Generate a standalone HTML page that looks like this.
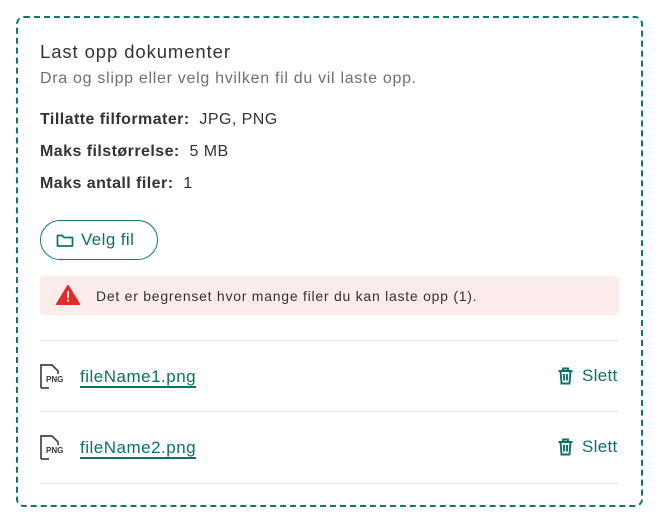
<!DOCTYPE html>
<html><head><meta charset="utf-8"><style>
*{margin:0;padding:0;box-sizing:border-box}
body{width:659px;height:524px;background:#fff;font-family:"Liberation Sans",sans-serif;color:#333;position:relative;overflow:hidden}
.box{position:absolute;left:16px;top:16px;width:627px;height:491px;border:2px dashed #13756f;border-radius:8px}
.a{position:absolute;left:40px;white-space:nowrap}
.teal{color:#0f6f69}
.hr{position:absolute;left:40px;width:579px;height:1px;background:#e6e6e6}
</style></head><body>
<div class="box"></div>
<div class="a" style="top:41px;font-size:18.5px;letter-spacing:0.9px;font-weight:500">Last opp dokumenter</div>
<div class="a" style="top:70px;font-size:16px;color:#707070;letter-spacing:0.7px">Dra og slipp eller velg hvilken fil du vil laste opp.</div>
<div class="a" style="top:111px;font-size:16px;letter-spacing:0.45px"><b style="font-weight:600">Tillatte filformater:</b>&nbsp; JPG, PNG</div>
<div class="a" style="top:143px;font-size:16px;letter-spacing:0.45px"><b style="font-weight:600">Maks filstørrelse:</b>&nbsp; 5 MB</div>
<div class="a" style="top:175px;font-size:16px;letter-spacing:0.45px"><b style="font-weight:600">Maks antall filer:</b>&nbsp; 1</div>
<div class="a teal" style="top:220px;width:118px;height:40px;border:1.5px solid #13756f;border-radius:20px;font-size:17px;padding:9px 0 0 40px;letter-spacing:0.4px">Velg fil
<svg style="position:absolute;left:15px;top:12px" width="18" height="15" viewBox="0 0 18 15"><path d="M1.5 2.5v10.5h15V4.5H8L6.5 2.5z" fill="none" stroke="#0f6f69" stroke-width="1.7" stroke-linejoin="round"/></svg></div>
<div class="a" style="top:276px;width:579px;height:39px;background:#fbebea;border-radius:4px;font-size:14px;padding:12px 0 0 56px;letter-spacing:0.75px">Det er begrenset hvor mange filer du kan laste opp (1).
<svg style="position:absolute;left:16px;top:9px" width="24" height="20" viewBox="0 0 24 20"><path d="M12 1L23 19H1z" fill="#e02b27" stroke="#e02b27" stroke-width="2" stroke-linejoin="round"/><rect x="11" y="6" width="2" height="7" fill="#fff"/><rect x="11" y="14.5" width="2" height="2" fill="#fff"/></svg></div>
<div class="hr" style="top:340px"></div>
<div class="hr" style="top:411px"></div>
<div class="hr" style="top:483px"></div>
<svg class="a" style="top:364px" width="26" height="25" viewBox="0 0 26 25"><path d="M1 24V1h11l6 6v3" fill="none" stroke="#444" stroke-width="1.7"/><path d="M1 24h8" stroke="#444" stroke-width="1.7"/><text x="6" y="18" font-size="8" font-weight="bold" font-family="Liberation Sans" fill="#333">PNG</text></svg>
<div class="a teal" style="left:80px;top:367px;font-size:17px;border-bottom:2px solid #0f6f69;line-height:19px;letter-spacing:0.5px">fileName1.png</div>
<svg class="a" style="top:435px" width="26" height="25" viewBox="0 0 26 25"><path d="M1 24V1h11l6 6v3" fill="none" stroke="#444" stroke-width="1.7"/><path d="M1 24h8" stroke="#444" stroke-width="1.7"/><text x="6" y="18" font-size="8" font-weight="bold" font-family="Liberation Sans" fill="#333">PNG</text></svg>
<div class="a teal" style="left:80px;top:438px;font-size:17px;border-bottom:2px solid #0f6f69;line-height:19px;letter-spacing:0.5px">fileName2.png</div>
<div class="a teal" style="left:582px;top:366px;font-size:17px;letter-spacing:0.3px">Slett</div>
<div class="a teal" style="left:582px;top:437px;font-size:17px;letter-spacing:0.3px">Slett</div>
<svg class="a" style="left:557px;top:367px" width="17" height="18" viewBox="0 0 16 18"><path d="M1 4h14M5.5 4V1.5h5V4M3 4l1 12.5h8L13 4M6.5 7v6.5M9.5 7v6.5" fill="none" stroke="#0f6f69" stroke-width="1.9"/></svg>
<svg class="a" style="left:557px;top:438px" width="17" height="18" viewBox="0 0 16 18"><path d="M1 4h14M5.5 4V1.5h5V4M3 4l1 12.5h8L13 4M6.5 7v6.5M9.5 7v6.5" fill="none" stroke="#0f6f69" stroke-width="1.9"/></svg>
</body></html>
